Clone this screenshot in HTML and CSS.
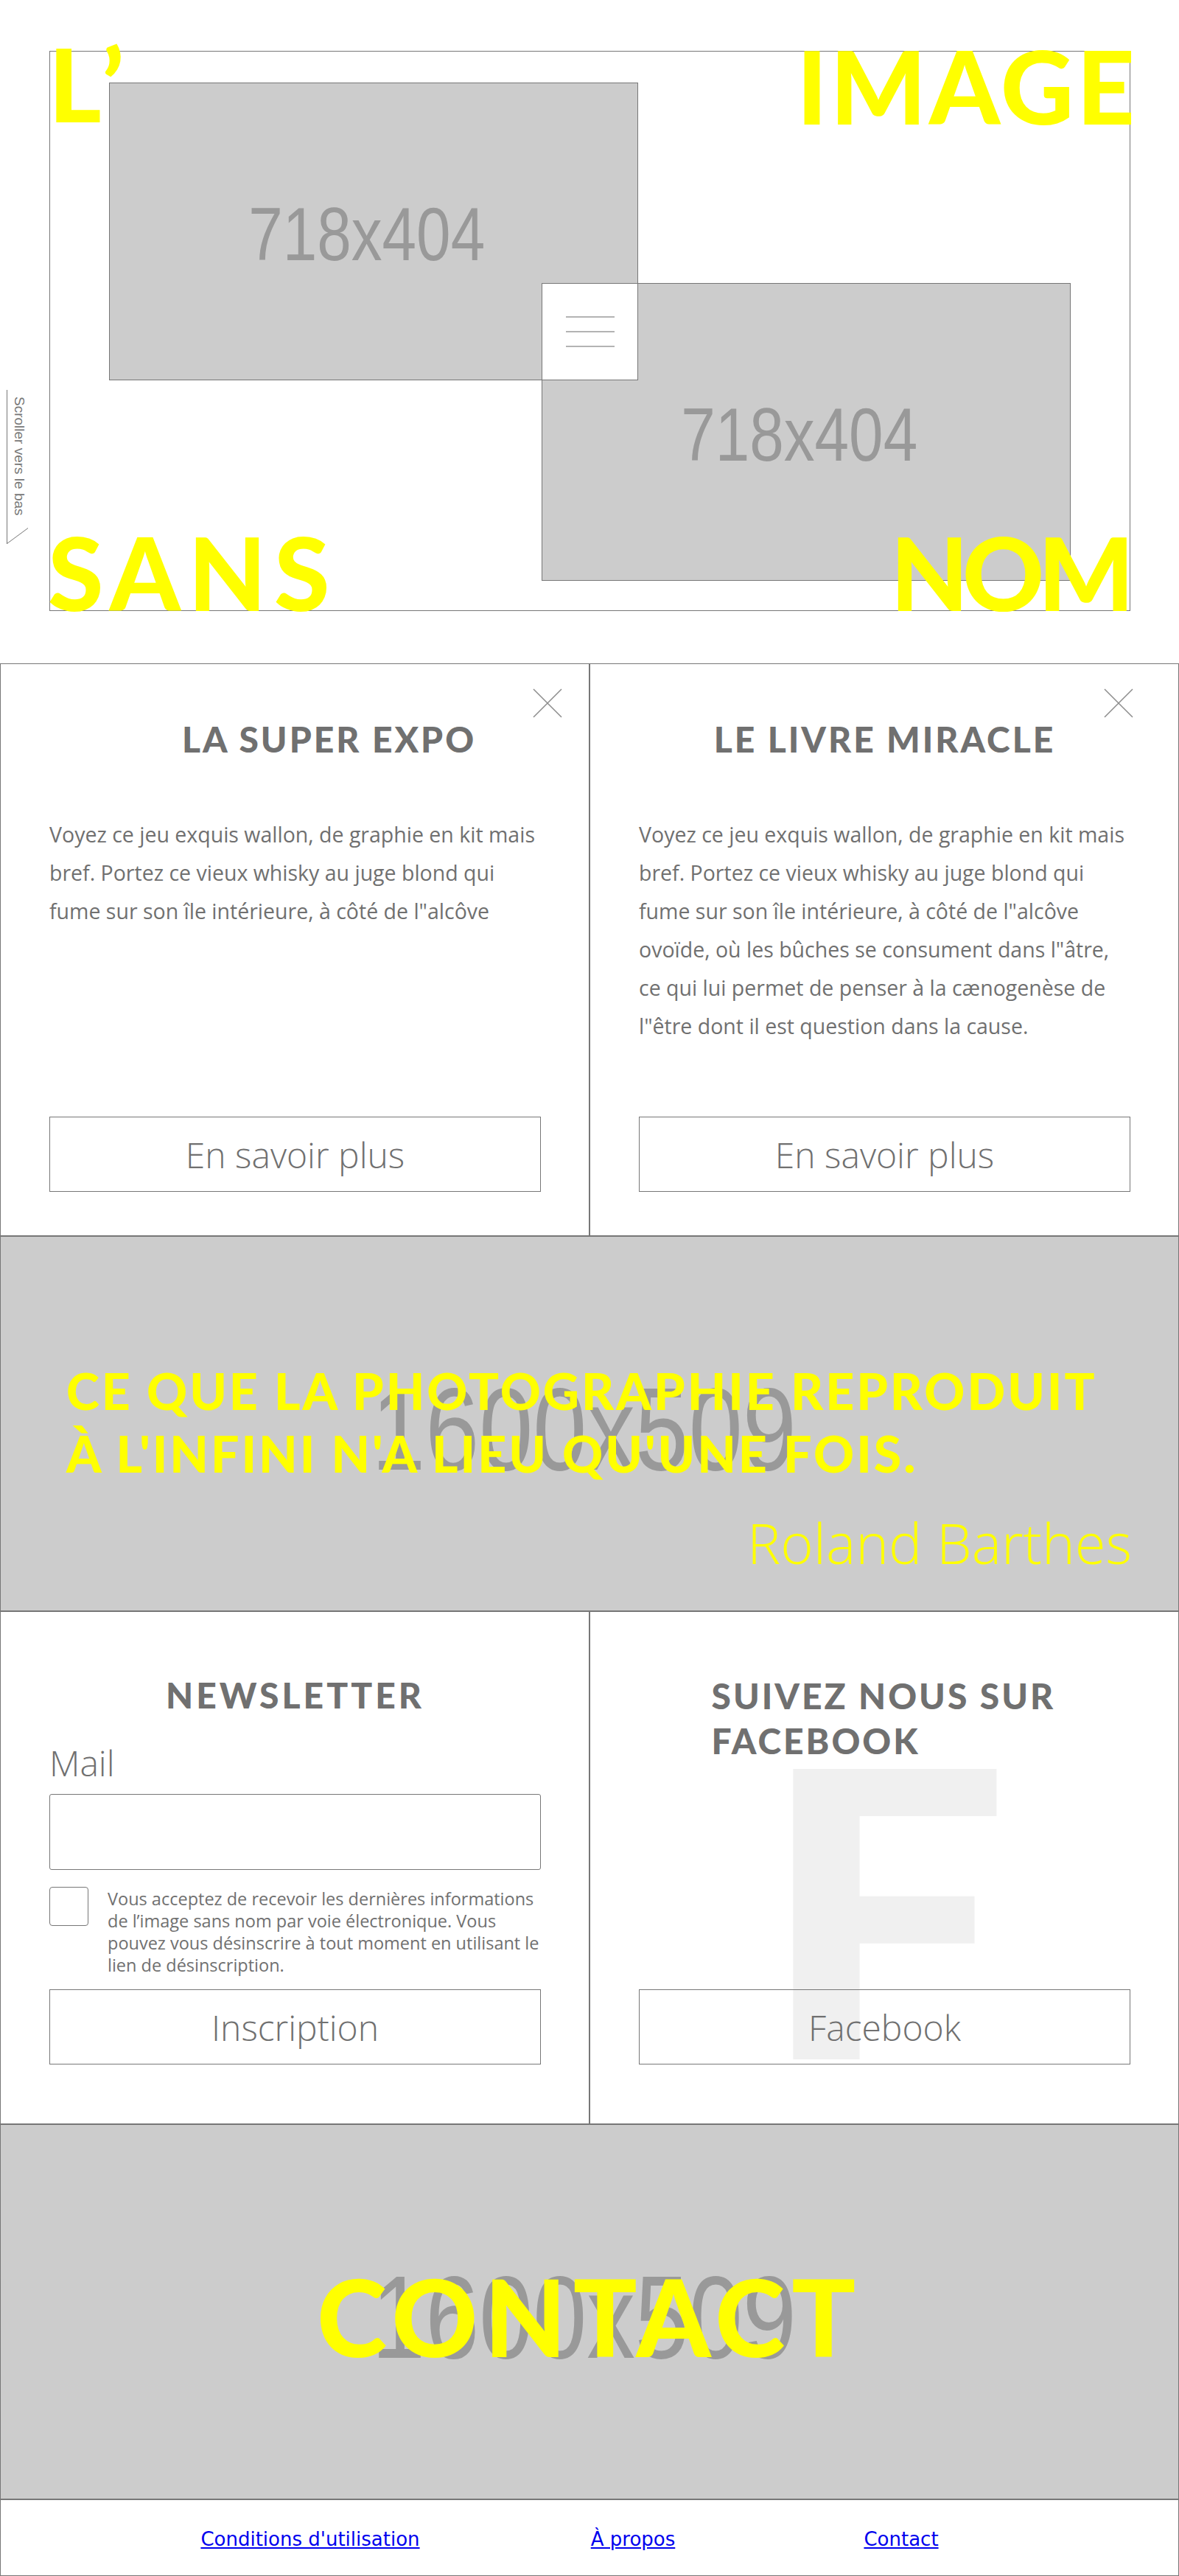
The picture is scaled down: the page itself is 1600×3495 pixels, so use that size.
FILE: index.html
```html
<!DOCTYPE html>
<html lang="fr">
<head>
<meta charset="utf-8">
<title>L’image sans nom</title>
<link rel="stylesheet" href="styles.css">
</head>
<body>
<header class="hero">
  <div class="scroll-hint">
    <span class="scroll-text">Scroller vers le bas</span>
    <svg class="scroll-arrow" width="30" height="22" viewBox="0 0 30 22"><line x1="0.5" y1="21.5" x2="29" y2="0.5" stroke="#777" stroke-width="1"/></svg>
  </div>
  <div class="frame">
    <div class="ph ph-a"><span>718x404</span></div>
    <div class="ph ph-b"><span>718x404</span></div>
    <button class="menu" type="button" aria-label="Menu"><span></span><span></span><span></span></button>
    <span class="big big-tl">L’</span>
    <span class="big big-tr">IMAGE</span>
    <span class="big big-bl">SANS</span>
    <span class="big big-br">NOM</span>
  </div>
</header>

<section class="cards">
  <article class="card">
    <svg class="close close-l" width="40" height="40" viewBox="0 0 40 40"><path d="M1 1L39 39M39 1L1 39" stroke="#8c8c8c" stroke-width="1.5" fill="none"/></svg>
    <h2 class="card-title shift">La super expo</h2>
    <p class="card-text">Voyez ce jeu exquis wallon, de graphie en kit mais<br>bref. Portez ce vieux whisky au juge blond qui<br>fume sur son île intérieure, à côté de l"alcôve</p>
    <a class="btn" href="#">En savoir plus</a>
  </article>
  <article class="card">
    <svg class="close close-r" width="40" height="40" viewBox="0 0 40 40"><path d="M1 1L39 39M39 1L1 39" stroke="#8c8c8c" stroke-width="1.5" fill="none"/></svg>
    <h2 class="card-title">Le livre miracle</h2>
    <p class="card-text">Voyez ce jeu exquis wallon, de graphie en kit mais<br>bref. Portez ce vieux whisky au juge blond qui<br>fume sur son île intérieure, à côté de l"alcôve<br>ovoïde, où les bûches se consument dans l"âtre,<br>ce qui lui permet de penser à la cænogenèse de<br>l"être dont il est question dans la cause.</p>
    <a class="btn" href="#">En savoir plus</a>
  </article>
</section>

<section class="quote">
  <span class="ph-text"><span>1600x509</span></span>
  <div class="quote-body">
    <p class="quote-text">Ce que la photographie reproduit<br>à l'infini n'a lieu qu'une fois.</p>
    <p class="quote-author">Roland Barthes</p>
  </div>
</section>

<section class="connect">
  <form class="panel" action="#">
    <h2 class="panel-title nl-title">Newsletter</h2>
    <label class="mail-label" for="mail">Mail</label>
    <input class="field" id="mail" type="email">
    <div class="consent">
      <input class="check" type="checkbox" id="ok">
      <label class="consent-text" for="ok">Vous acceptez de recevoir les dernières informations<br>de l’image sans nom par voie électronique. Vous<br>pouvez vous désinscrire à tout moment en utilisant le<br>lien de désinscription.</label>
    </div>
    <button class="btn" type="button">Inscription</button>
  </form>
  <div class="panel">
    <span class="fb-mark" aria-hidden="true">F</span>
    <h2 class="panel-title fb-title">Suivez nous sur facebook</h2>
    <a class="btn" href="#">Facebook</a>
  </div>
</section>

<section class="contact">
  <span class="ph-text"><span>1600x509</span></span>
  <h2 class="contact-title">CONTACT</h2>
</section>

<footer class="footer">
  <a href="#">Conditions d'utilisation</a>
  <a href="#">À propos</a>
  <a href="#">Contact</a>
</footer>
</body>
</html>
```
FILE: styles.css
```css
* { box-sizing: border-box; }
html, body { margin: 0; padding: 0; }
body {
  width: 1600px;
  background: #fff;
  font-family: "Open Sans", sans-serif;
  color: #707070;
  overflow-x: hidden;
}

/* HERO */
.hero {
  position: relative;
  height: 900px;
  padding: 69px 66px 0 67px;
}
.scroll-hint {
  position: absolute;
  left: 9px;
  top: 529px;
  width: 29px;
  height: 209px;
  border-left: 1px solid #777;
}
.scroll-text {
  display: block;
  writing-mode: vertical-rl;
  font-family: "Liberation Sans", Arial, sans-serif;
  font-size: 19px;
  line-height: 19px;
  color: #777;
  margin: 9px 0 0 7px;
  white-space: nowrap;
}
.scroll-arrow { position: absolute; left: -1px; bottom: 0; }

.frame {
  position: relative;
  display: grid;
  grid-template-columns: 80px 587px 131px 587px 80px;
  grid-template-rows: 42px 272px 132px 272px 40px;
  border: 1px solid #777;
}
.ph {
  display: flex;
  align-items: center;
  justify-content: center;
  background: #ccc;
  border: 1px solid #777;
  color: #999;
  font-family: "Liberation Sans", Arial, sans-serif;
  font-size: 102px;
  line-height: 1;
  overflow: hidden;
}
.ph span { display: inline-block; margin: 8px 18px 0 0; transform: scaleX(0.82); }
.ph-a { grid-column: 2 / 4; grid-row: 2 / 4; }
.ph-b { grid-column: 3 / 5; grid-row: 3 / 5; }
.menu {
  grid-column: 3;
  grid-row: 3;
  z-index: 2;
  margin: 0;
  padding: 44px 0 0;
  background: #fff;
  border: 1px solid #777;
  display: flex;
  flex-direction: column;
  align-items: center;
  justify-content: flex-start;
  gap: 18px;
  cursor: pointer;
}
.menu span { display: block; width: 66px; height: 2px; background: #b3b3b3; }

.big {
  position: absolute;
  z-index: 3;
  font-family: Lato, sans-serif;
  font-weight: 900;
  font-size: 137px;
  line-height: 1;
  color: #ff0;
  white-space: nowrap;
}
.big-tl { left: -2px; top: -25.5px; letter-spacing: 14px; }
.big-tr { right: -11px; top: -22.5px; letter-spacing: 4px; }
.big-bl { left: -3px; top: 637.5px; letter-spacing: 10.5px; }
.big-br { right: 2.5px; top: 637.5px; letter-spacing: -8.5px; }

/* CARDS */
.cards { display: grid; grid-template-columns: 800px 800px; }
.card {
  position: relative;
  height: 777px;
  border: 1px solid #777;
  display: flex;
  flex-direction: column;
  padding: 0 65px 59px 66px;
}
.close { position: absolute; top: 33px; }
.close-l { right: 36px; }
.close-r { right: 61px; }
.card-title {
  margin: 73px 0 0;
  font-family: Lato, sans-serif;
  font-weight: 900;
  font-size: 48px;
  line-height: 57.6px;
  letter-spacing: 3px;
  text-align: center;
  text-transform: uppercase;
  color: #707070;
}
.card-title.shift { padding-left: 92px; }
.card-text {
  margin: 74px 0 0;
  font-size: 28.5px;
  line-height: 52px;
  color: #707070;
  white-space: nowrap;
}
.btn {
  margin-top: auto;
  display: flex;
  align-items: center;
  justify-content: center;
  width: 100%;
  height: 102px;
  border: 1px solid #777;
  background: transparent;
  font-family: "Open Sans", sans-serif;
  font-weight: 300;
  font-size: 48px;
  color: #707070;
  text-decoration: none;
  cursor: pointer;
  padding: 0;
}

/* QUOTE */
.quote {
  display: grid;
  height: 509px;
  border: 1px solid #777;
  background: #ccc;
  overflow: hidden;
}
.quote > *, .contact > * { grid-area: 1 / 1; }
.ph-text {
  place-self: center;
  margin: 15px 16px 0 0;
  font-family: "Liberation Sans", Arial, sans-serif;
  font-size: 160px;
  line-height: 1;
  color: #999;
}
.ph-text span { display: inline-block; transform: scaleX(0.82); }
.quote-body {
  position: relative;
  z-index: 1;
  align-self: start;
  padding: 166px 63px 0 89px;
}
.quote-text {
  margin: 0;
  font-family: Lato, sans-serif;
  font-weight: 900;
  font-size: 68px;
  line-height: 85px;
  letter-spacing: 3px;
  text-transform: uppercase;
  color: #ff0;
  white-space: nowrap;
}
.quote-author {
  margin: 33px 0 0;
  text-align: right;
  font-weight: 300;
  font-size: 76px;
  line-height: 1.2;
  color: #ff0;
}

/* NEWSLETTER / FACEBOOK */
.connect { display: grid; grid-template-columns: 800px 800px; }
.panel {
  position: relative;
  z-index: 0;
  height: 696px;
  margin: 0;
  border: 1px solid #777;
  display: flex;
  flex-direction: column;
  padding: 0 65px 80px 66px;
}
.panel-title {
  margin: 84px 0 0;
  font-family: Lato, sans-serif;
  font-weight: 900;
  font-size: 48px;
  line-height: 57.6px;
  letter-spacing: 3px;
  text-align: center;
  text-transform: uppercase;
  color: #707070;
}
.nl-title { letter-spacing: 4px; }
.fb-title {
  width: 470px;
  margin: 82.5px auto 0;
  line-height: 61px;
  text-align: left;
}
.mail-label {
  margin-top: 34px;
  font-weight: 300;
  font-size: 48px;
  line-height: 57.6px;
  color: #707070;
}
.field {
  margin: 14px 0 0;
  width: 100%;
  height: 103px;
  border: 1px solid #777;
  border-radius: 3px;
  background: #fff;
  font-family: "Open Sans", sans-serif;
  font-size: 30px;
  padding: 0 20px;
}
.consent { display: flex; gap: 26px; margin-top: 23px; }
.check {
  appearance: none;
  -webkit-appearance: none;
  flex: 0 0 53px;
  width: 53px;
  height: 53px;
  margin: 0;
  border: 1px solid #777;
  border-radius: 4px;
  background: #fff;
}
.consent-text {
  font-size: 23.5px;
  line-height: 30px;
  color: #707070;
  white-space: nowrap;
  padding-top: 1px;
}
.fb-mark {
  position: absolute;
  z-index: -1;
  left: 230px;
  top: 126px;
  font-family: Lato, sans-serif;
  font-weight: 900;
  font-size: 543px;
  line-height: 1;
  color: #f0f0f0;
  transform: scaleX(1.1);
  transform-origin: left top;
}

/* CONTACT */
.contact {
  display: grid;
  height: 509px;
  border: 1px solid #777;
  background: #ccc;
  overflow: hidden;
}
.contact-title {
  position: relative;
  z-index: 1;
  place-self: center;
  margin: 12px 0 0;
  font-family: Lato, sans-serif;
  font-weight: 900;
  font-size: 144px;
  line-height: 1;
  letter-spacing: 9px;
  color: #ff0;
}

/* FOOTER */
.footer {
  height: 104px;
  border: 1px solid #777;
  display: grid;
  grid-template-columns: 496px 380px 348px;
  align-items: center;
  padding: 4px 0 0 172px;
}
.footer a {
  justify-self: center;
  font-family: "DejaVu Sans", sans-serif;
  font-size: 26px;
  color: #00e;
  text-decoration: underline;
}
```
